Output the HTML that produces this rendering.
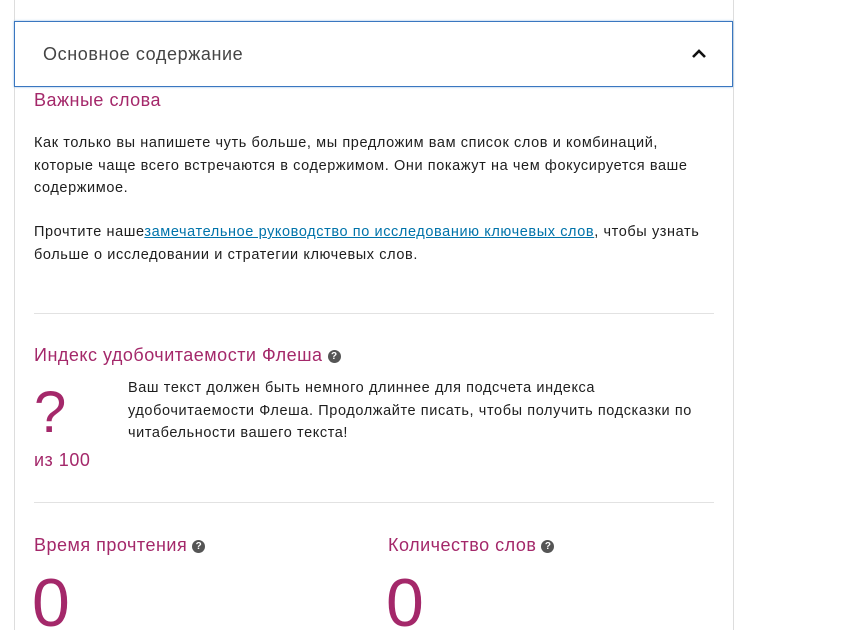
<!DOCTYPE html>
<html><head><meta charset="utf-8"><style>
body{margin:0;width:849px;height:630px;background:#fff;font-family:"Liberation Sans",sans-serif;position:relative;overflow:hidden;color:#1e1e1e}
.a{position:absolute;white-space:nowrap}
.p{color:#a4286a;letter-spacing:0.5px}
.q{display:inline-block;width:13px;height:13px;border-radius:50%;background:#555;color:#fff;font-size:10px;font-weight:bold;text-align:center;line-height:13px;vertical-align:2px;margin-left:5px;letter-spacing:0}
.t{font-size:14.5px;line-height:22.5px;letter-spacing:0.6px}
</style></head><body>
<div class="a" style="left:14px;top:0;width:0;height:630px;border-left:1px solid #ddd"></div>
<div class="a" style="left:733px;top:0;width:0;height:630px;border-left:1px solid #ddd"></div>
<div class="a" style="left:14px;top:21px;width:717px;height:64px;border:1px solid #3a77c0;box-shadow:0 0 2px #8ab4e0;background:#fff"></div>
<div class="a" style="left:43px;top:44px;font-size:18px;color:#444;letter-spacing:0.6px">Основное содержание</div>
<svg class="a" style="left:691px;top:48px" width="16" height="12" viewBox="0 0 16 12"><path d="M2 9 L8 3 L14 9" stroke="#111" stroke-width="2.6" fill="none"/></svg>
<div class="a p" style="left:34px;top:90px;font-size:18px">Важные слова</div>
<div class="a t" style="left:34px;top:132px">Как только вы напишете чуть больше, мы предложим вам список слов и комбинаций,<br>которые чаще всего встречаются в содержимом. Они покажут на чем фокусируется ваше<br>содержимое.</div>
<div class="a t" style="left:34px;top:221px">Прочтите наше<span style="color:#0073aa;text-decoration:underline">замечательное руководство по исследованию ключевых слов</span>, чтобы узнать<br>больше о исследовании и стратегии ключевых слов.</div>
<div class="a" style="left:34px;top:313px;width:680px;border-top:1px solid #e2e2e2"></div>
<div class="a p" style="left:34px;top:345px;font-size:18px">Индекс удобочитаемости Флеша<span class="q">?</span></div>
<div class="a p" style="left:34px;top:378px;font-size:58px;line-height:70px">?</div>
<div class="a p" style="left:34px;top:450px;font-size:18px">из 100</div>
<div class="a t" style="left:128px;top:377px">Ваш текст должен быть немного длиннее для подсчета индекса<br>удобочитаемости Флеша. Продолжайте писать, чтобы получить подсказки по<br>читабельности вашего текста!</div>
<div class="a" style="left:34px;top:502px;width:680px;border-top:1px solid #e2e2e2"></div>
<div class="a p" style="left:34px;top:535px;font-size:18px">Время прочтения<span class="q">?</span></div>
<div class="a p" style="left:388px;top:535px;font-size:18px">Количество слов<span class="q">?</span></div>
<div class="a p" style="left:32px;top:563px;font-size:68px;line-height:80px">0</div>
<div class="a p" style="left:386px;top:563px;font-size:68px;line-height:80px">0</div>
</body></html>
